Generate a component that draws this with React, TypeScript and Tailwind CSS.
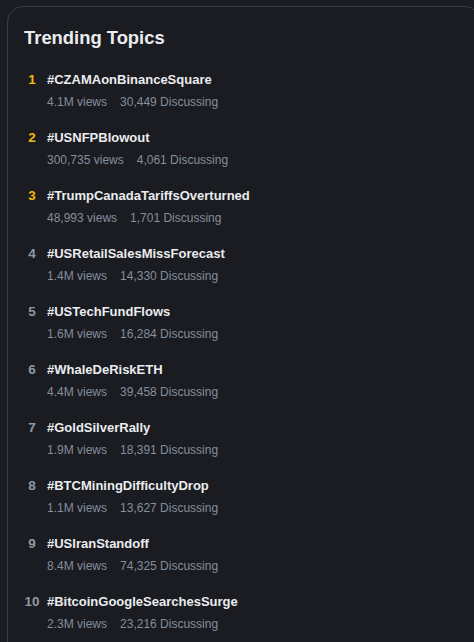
import React from "react";

const topics = [
  { tag: "#CZAMAonBinanceSquare", views: "4.1M views", disc: "30,449 Discussing" },
  { tag: "#USNFPBlowout", views: "300,735 views", disc: "4,061 Discussing" },
  { tag: "#TrumpCanadaTariffsOverturned", views: "48,993 views", disc: "1,701 Discussing" },
  { tag: "#USRetailSalesMissForecast", views: "1.4M views", disc: "14,330 Discussing" },
  { tag: "#USTechFundFlows", views: "1.6M views", disc: "16,284 Discussing" },
  { tag: "#WhaleDeRiskETH", views: "4.4M views", disc: "39,458 Discussing" },
  { tag: "#GoldSilverRally", views: "1.9M views", disc: "18,391 Discussing" },
  { tag: "#BTCMiningDifficultyDrop", views: "1.1M views", disc: "13,627 Discussing" },
  { tag: "#USIranStandoff", views: "8.4M views", disc: "74,325 Discussing" },
  { tag: "#BitcoinGoogleSearchesSurge", views: "2.3M views", disc: "23,216 Discussing" },
];

export default function App() {
  return (
    <div
      className="w-[474px] h-[642px] overflow-hidden bg-[#1b1c21] pl-[7px] pt-[6px]"
      style={{ fontFamily: "'Liberation Sans', Arial, sans-serif" }}
    >
      <div className="w-[474px] h-[700px] rounded-[16px] border border-[#3b3e45] bg-[#1b1c21] pl-[16px] pt-[17px]">
        <h2 className="text-[18.4px] leading-[28px] font-bold text-[#eaecef]">
          Trending Topics
        </h2>
        <div className="mt-[18px] flex flex-col gap-[18px]">
          {topics.map((t, i) => (
            <div key={t.tag} className="flex">
              <div
                className={
                  "w-[16px] mr-[7px] text-center text-[13.5px] leading-[20px] font-bold " +
                  (i < 3 ? "text-[#f0b90b]" : "text-[#8f98a3]")
                }
              >
                {i + 1}
              </div>
              <div className="flex flex-col gap-[4px]">
                <div className="text-[13px] leading-[20px] font-bold text-[#eaecef]">{t.tag}</div>
                <div className="flex gap-[13px] text-[12px] leading-[16px] text-[#848e9c]">
                  <span>{t.views}</span>
                  <span>{t.disc}</span>
                </div>
              </div>
            </div>
          ))}
        </div>
      </div>
    </div>
  );
}
